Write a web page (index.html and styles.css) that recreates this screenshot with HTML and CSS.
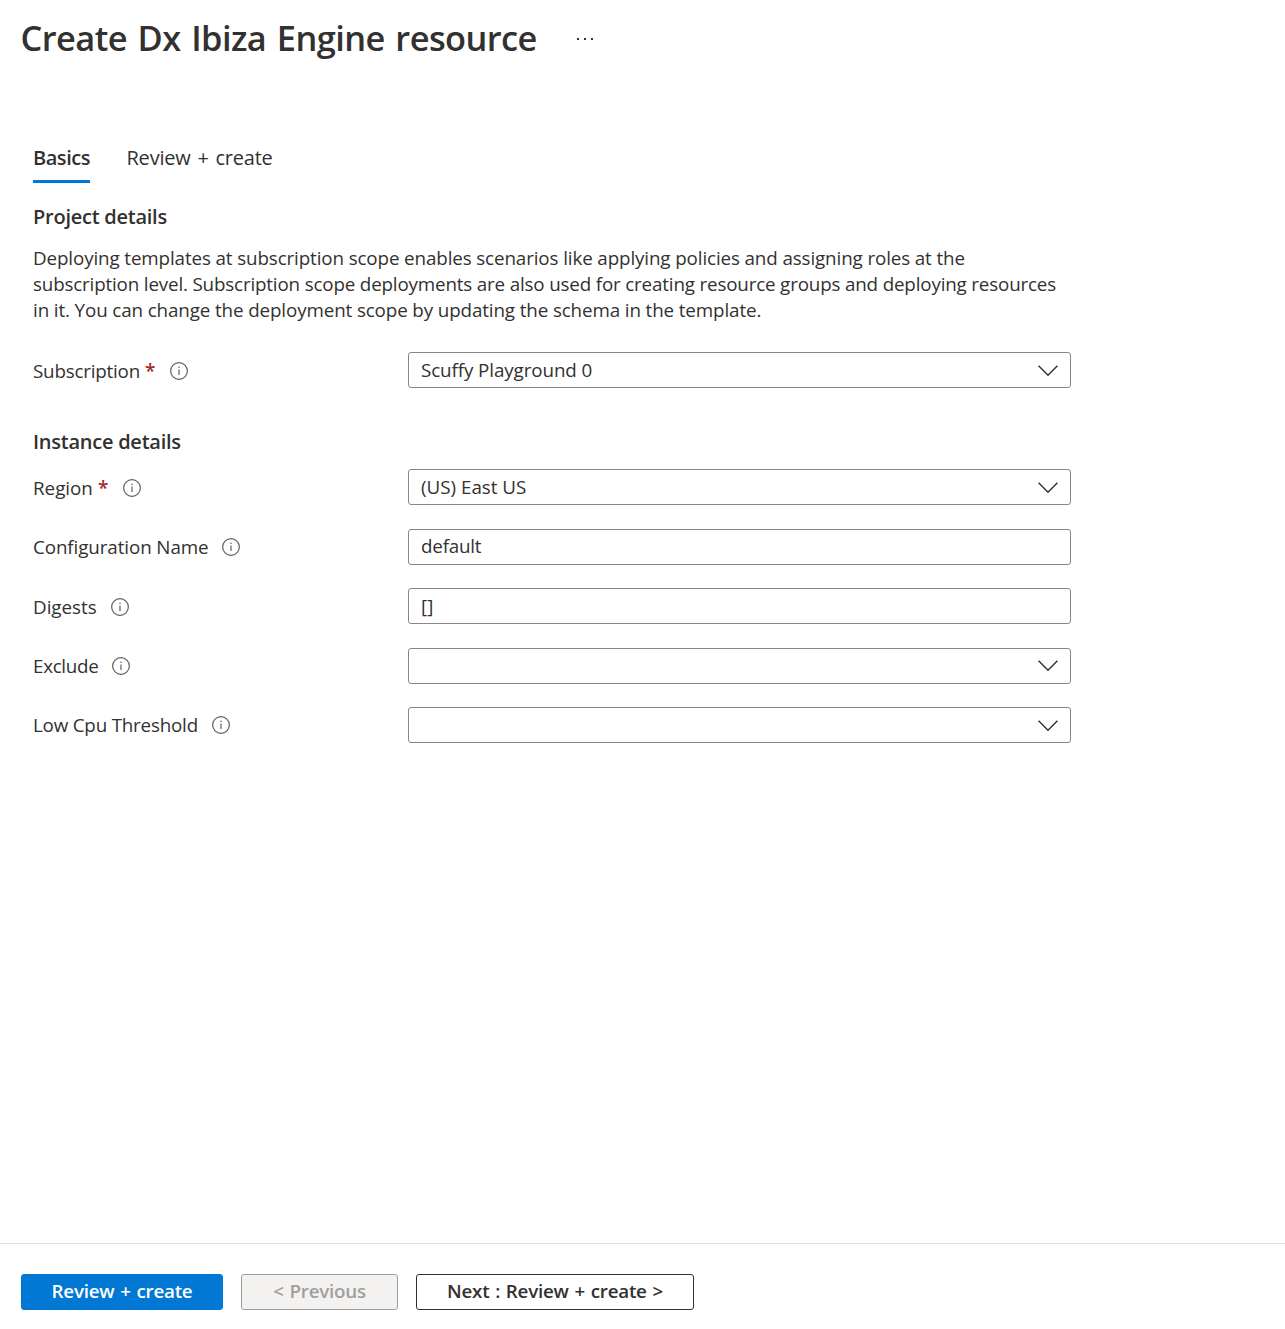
FILE: index.html
```html
<!DOCTYPE html>
<html lang="en">
<head>
<meta charset="utf-8">
<title>Create Dx Ibiza Engine resource</title>
<link rel="stylesheet" href="styles.css">
</head>
<body>
<svg class="sprite" width="0" height="0" aria-hidden="true">
  <symbol id="info" viewBox="0 0 18 18"><circle cx="9" cy="9" r="8.35" fill="none" stroke="#605e5c" stroke-width="1.2"/><path d="M9 7.5V13" stroke="#605e5c" stroke-width="1.2"/><circle cx="9" cy="5.3" r="0.8" fill="#605e5c"/></symbol>
  <symbol id="chevron" viewBox="0 0 20 12"><path d="M0.6 0.8L10 10.2L19.4 0.8" fill="none" stroke="#323130" stroke-width="1.4"/></symbol>
</svg>
<div class="page">
  <header class="header">
    <h1 class="title">Create Dx Ibiza Engine resource</h1>
    <span class="more"><i></i><i></i><i></i></span>
  </header>
  <nav class="tabs">
    <a class="tab active">Basics</a>
    <a class="tab review">Review + create</a>
  </nav>
  <main class="form">
    <h2 class="heading">Project details</h2>
    <p class="description">Deploying templates at subscription scope enables scenarios like applying policies and assigning roles at the<br><span class="dense">subscription level. Subscription scope deployments are also used for creating resource groups and deploying resources</span><br>in it. You can change the deployment scope by updating the schema in the template.</p>
    <div class="row">
      <label class="label low"><span class="tight">Subscription</span><b class="required">*</b><svg class="info"><use href="#info"/></svg></label>
      <div class="field"><span class="snug">Scuffy Playground 0</span><svg class="chevron"><use href="#chevron"/></svg></div>
    </div>
    <h2 class="heading second">Instance details</h2>
    <div class="rows">
      <div class="row">
        <label class="label low"><span>Region</span><b class="required">*</b><svg class="info"><use href="#info"/></svg></label>
        <div class="field"><span>(US) East US</span><svg class="chevron"><use href="#chevron"/></svg></div>
      </div>
      <div class="row">
        <label class="label"><span class="snug">Configuration Name</span><svg class="info"><use href="#info"/></svg></label>
        <div class="field high"><span class="tight">default</span></div>
      </div>
      <div class="row">
        <label class="label low"><span>Digests</span><svg class="info"><use href="#info"/></svg></label>
        <div class="field"><span>[]</span></div>
      </div>
      <div class="row">
        <label class="label"><span class="tightest">Exclude</span><svg class="info"><use href="#info"/></svg></label>
        <div class="field"><svg class="chevron"><use href="#chevron"/></svg></div>
      </div>
      <div class="row">
        <label class="label"><span class="tight">Low Cpu Threshold</span><svg class="info"><use href="#info"/></svg></label>
        <div class="field"><svg class="chevron"><use href="#chevron"/></svg></div>
      </div>
    </div>
  </main>
  <footer class="footer">
    <button class="button primary">Review + create</button>
    <button class="button disabled" disabled>&lt; Previous</button>
    <button class="button next">Next : Review + create &gt;</button>
  </footer>
</div>
</body>
</html>
```
FILE: styles.css
```css
* { box-sizing: border-box; }
body { margin: 0; background: #fff; color: #323130; font-family: "Open Sans", "Noto Sans", sans-serif; font-size: 18.8px; }
h1, h2, p { margin: 0; }
.sprite { display: block; height: 0; }
.page { height: 1329px; display: flex; flex-direction: column; }
.header { display: flex; height: 78px; padding-left: 20.5px; }
.title { width: 516px; font-size: 34.4px; font-weight: 600; line-height: 76px; letter-spacing: -0.56px; word-spacing: 2.2px; white-space: nowrap; }
.more { display: flex; gap: 5px; padding: 38px 0 0 40.5px; }
.more i { width: 2px; height: 2px; background: #323130; }
.tabs { display: flex; gap: 36.5px; padding: 62px 33px 0; }
.tab { height: 43px; font-size: 20px; line-height: 36px; }
.tab.active { width: 57px; font-weight: 600; letter-spacing: -0.46px; border-bottom: 3px solid #0078d4; }
.tab.review { letter-spacing: -0.22px; word-spacing: 1.9px; }
.form { flex: 1; padding: 20px 33px 0; }
.heading { font-size: 20px; font-weight: 600; line-height: 28px; letter-spacing: -0.25px; }
.description { margin-top: 14px; line-height: 26px; letter-spacing: -0.115px; white-space: nowrap; }
.dense { letter-spacing: -0.163px; }
.row { display: flex; height: 36px; }
.form > .row { margin-top: 29px; }
.second { margin-top: 40px; }
.rows { display: flex; flex-direction: column; gap: 23.5px; margin-top: 13px; }
.label { width: 375px; display: flex; align-items: center; }
.label.low { padding-top: 1px; }
.snug { letter-spacing: -0.095px; }
.tight { letter-spacing: -0.2px; }
.tightest { letter-spacing: -0.3px; }
.required { width: 11px; margin-left: 5px; color: #a4262c; font-size: 19px; font-weight: 600; }
.info { width: 18px; height: 18px; margin-left: 14px; }
.field { width: 663px; display: flex; align-items: center; padding: 0 12px; border: 1px solid #8a8886; border-radius: 3px; }
.field.high { padding-bottom: 2px; }
.chevron { width: 20px; height: 12px; margin: 1px 0 0 auto; }
.footer { display: flex; gap: 18px; height: 86px; padding: 30px 21px 0; border-top: 1px solid #e1dfdd; }
.button { height: 36px; padding: 0 0 2px; border-radius: 3px; font: 600 18.8px "Open Sans", "Noto Sans", sans-serif; letter-spacing: -0.25px; word-spacing: 1.2px; white-space: nowrap; }
.primary { width: 202px; background: #0078d4; border: 1px solid #0078d4; color: #fff; }
.disabled { width: 157px; background: #f3f2f1; border: 1px solid #a19f9d; color: #a19f9d; }
.next { width: 278px; background: #fff; border: 1px solid #323130; color: #323130; }
```
